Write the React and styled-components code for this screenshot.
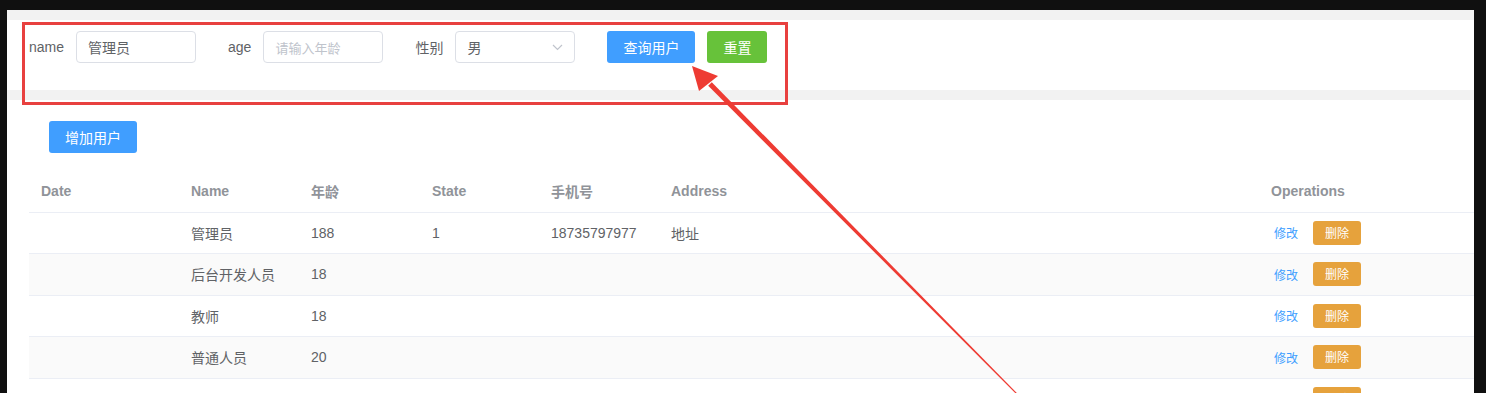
import React from "react";
import styled, { createGlobalStyle } from "styled-components";

const Global = createGlobalStyle`
  html, body { margin: 0; padding: 0; background: #101010; }
  body { font-family: "Liberation Sans", Arial, "Noto Sans CJK SC", sans-serif; }
  * { box-sizing: border-box; }
`;

const Screen = styled.div`
  position: relative;
  width: 1486px;
  height: 393px;
  overflow: hidden;
  padding: 10px 12px 0 7px;
  background: #101010;
`;

const Shell = styled.div`
  background: #f2f2f2;
  padding-top: 10px;
  display: flex;
  flex-direction: column;
  gap: 10px;
`;

const FormPanel = styled.div`
  flex-shrink: 0;
  background: #fff;
  height: 70px;
  padding: 11px 22px 0;
  display: flex;
  align-items: flex-start;
`;

const FormItem = styled.div`
  display: flex;
  align-items: center;
  height: 32px;
  margin-right: ${(p) => p.$gap ?? 32}px;
`;

const Label = styled.label`
  font-size: 14px;
  color: #606266;
  padding-right: 12px;
  white-space: nowrap;
`;

const Input = styled.div`
  width: 120px;
  height: 32px;
  border: 1px solid #dcdfe6;
  border-radius: 4px;
  padding: 0 11px;
  display: flex;
  align-items: center;
  justify-content: space-between;
  color: ${(p) => (p.$placeholder ? "#c0c4cc" : "#606266")};
  font-family: "Noto Sans CJK SC", sans-serif;
  font-size: ${(p) => (p.$placeholder ? "13px" : "14px")};
`;

const Button = styled.button`
  height: ${(p) => (p.$mini ? 24 : 32)}px;
  padding: 0 ${(p) => (p.$mini ? 12 : 16)}px;
  border: none;
  border-radius: 3px;
  font-family: "Noto Sans CJK SC", sans-serif;
  font-size: ${(p) => (p.$mini ? 12 : 14)}px;
  color: #fff;
  background: ${(p) => p.$color};
  cursor: pointer;
  line-height: 1;
  margin-right: ${(p) => p.$mr ?? 0}px;
`;

const Main = styled.div`
  flex-shrink: 0;
  background: #fff;
  padding: 21px 0 40px 22px;
  display: flex;
  flex-direction: column;
  align-items: flex-start;
`;

const AddWrap = styled.div`
  margin-left: 20px;
`;

const Table = styled.table`
  margin-top: 18px;
  width: 1445px;
  table-layout: fixed;
  border-collapse: collapse;
`;

const HeadCell = styled.th`
  height: 41px;
  padding: 0 0 0 12px;
  text-align: left;
  font-size: 14px;
  font-weight: bold;
  color: #909399;
  border-bottom: 1px solid #ebeef5;
  font-family: "Liberation Sans", Arial, "Noto Sans CJK SC", sans-serif;
`;

const Row = styled.tr`
  background: ${(p) => (p.$stripe ? "#fafafa" : "#fff")};
`;

const Cell = styled.td`
  height: 41.5px;
  padding: 0 0 0 12px;
  font-size: 14px;
  color: #606266;
  border-bottom: 1px solid #ebeef5;
  white-space: nowrap;
  font-family: "Liberation Sans", Arial, "Noto Sans CJK SC", sans-serif;
`;

const Ops = styled.div`
  display: flex;
  align-items: center;
  gap: 12px;
`;

const LinkBtn = styled.span`
  font-size: 12px;
  color: #409eff;
  padding: 0 3px;
  font-family: "Noto Sans CJK SC", sans-serif;
`;

const Cjk = styled.span`
  font-family: "Noto Sans CJK SC", sans-serif;
`;

const Highlight = styled.div`
  position: absolute;
  left: 22px;
  top: 22px;
  width: 766px;
  height: 83px;
  border: 3px solid #e8403f;
  pointer-events: none;
`;

const Overlay = styled.svg`
  position: absolute;
  left: 0;
  top: 0;
  pointer-events: none;
`;

const rows = [
  { name: "管理员", age: "188", state: "1", phone: "18735797977", addr: "地址" },
  { name: "后台开发人员", age: "18" },
  { name: "教师", age: "18" },
  { name: "普通人员", age: "20" },
  { name: "学生", age: "18" },
];

const cols = [150, 120, 121, 119, 120, 600, 215];

export default function App() {
  return (
    <>
      <Global />
      <Screen>
        <Shell>
          <FormPanel>
            <FormItem>
              <Label>name</Label>
              <Input>管理员</Input>
            </FormItem>
            <FormItem>
              <Label>age</Label>
              <Input $placeholder>请输入年龄</Input>
            </FormItem>
            <FormItem>
              <Label>
                <Cjk>性别</Cjk>
              </Label>
              <Input>
                <span>男</span>
                <svg width="11" height="7" viewBox="0 0 11 7">
                  <path d="M1 1l4.5 4.5L10 1" fill="none" stroke="#c0c4cc" strokeWidth="1.2" />
                </svg>
              </Input>
            </FormItem>
            <FormItem $gap={0}>
              <Button $color="#409eff" $mr={12}>查询用户</Button>
              <Button $color="#67c23a">重置</Button>
            </FormItem>
          </FormPanel>
          <Main>
            <AddWrap>
              <Button $color="#409eff">增加用户</Button>
            </AddWrap>
            <Table>
              <colgroup>
                {cols.map((w, i) => (
                  <col key={i} style={{ width: w }} />
                ))}
              </colgroup>
              <thead>
                <tr>
                  <HeadCell>Date</HeadCell>
                  <HeadCell>Name</HeadCell>
                  <HeadCell>年龄</HeadCell>
                  <HeadCell>State</HeadCell>
                  <HeadCell>手机号</HeadCell>
                  <HeadCell>Address</HeadCell>
                  <HeadCell>Operations</HeadCell>
                </tr>
              </thead>
              <tbody>
                {rows.map((r, i) => (
                  <Row key={i} $stripe={i % 2 === 1}>
                    <Cell></Cell>
                    <Cell>{r.name}</Cell>
                    <Cell>{r.age}</Cell>
                    <Cell>{r.state || ""}</Cell>
                    <Cell>{r.phone || ""}</Cell>
                    <Cell>{r.addr || ""}</Cell>
                    <Cell>
                      <Ops>
                        <LinkBtn>修改</LinkBtn>
                        <Button $mini $color="#e6a23c">删除</Button>
                      </Ops>
                    </Cell>
                  </Row>
                ))}
              </tbody>
            </Table>
          </Main>
        </Shell>
        <Highlight />
        <Overlay width="1486" height="393" viewBox="0 0 1486 393">
          <polygon
            points="1017.4,393.6 1016.6,394.4 708.2,85.8 711.8,82.2"
            fill="#ee3b33"
          />
          <polygon points="692,66 718,76 699,91" fill="#ee3b33" />
        </Overlay>
      </Screen>
    </>
  );
}
